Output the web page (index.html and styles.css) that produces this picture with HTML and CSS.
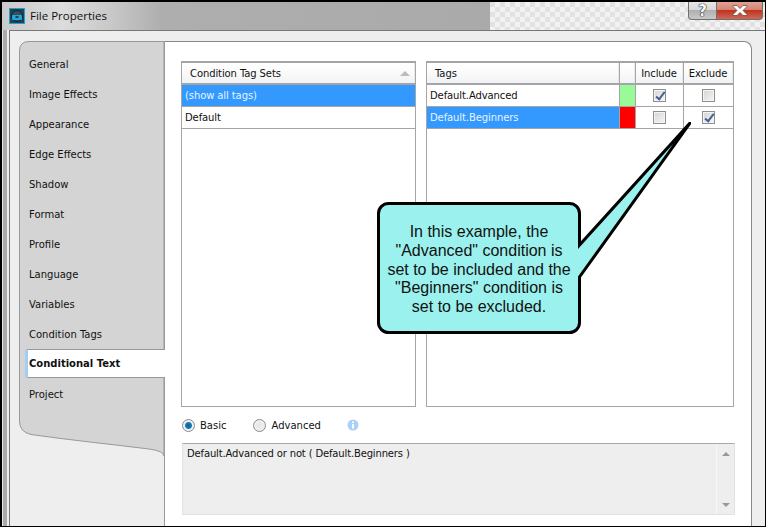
FILE: index.html
```html
<!DOCTYPE html>
<html>
<head>
	<meta charset="utf-8">
	<title>File Properties</title>
	<link rel="stylesheet" href="styles.css">
</head>
<body>
<div class="window">
	<div class="titlebar">
		<svg class="appicon" width="16" height="16" viewBox="0 0 16 16">
			<rect x="0.5" y="0.5" width="15" height="15" fill="#27424f" stroke="#1ba1d8"/>
			<circle cx="8" cy="8" r="5.5" fill="#33505e" stroke="#16222a"/>
			<rect x="3" y="7" width="10" height="5" rx="1" fill="#1ea5dd"/>
			<rect x="6.5" y="8" width="3" height="2" fill="#27424f"/>
		</svg>
		<span class="title">File Properties</span>
		<div class="checks"></div>
		<div class="winbtns">
			<div class="btn help">?</div>
			<div class="btn close">
				<svg width="16" height="11" viewBox="0 0 16 11">
					<path d="M1 0.5h4l3 3 3-3h4v1l-4 4 4 4v1h-4l-3-3-3 3h-4v-1l4-4-4-4z" fill="#fff" stroke="#6d4a44" stroke-width="0.8"/>
				</svg>
			</div>
		</div>
	</div>

	<div class="panel">
		<div class="sidebar">
			<svg class="tabshape" width="146" height="416" viewBox="0 0 146 416">
				<path d="M145 0.5H10Q0.5 0.5 0.5 10V380Q0.5 391 12 393.500C50 399 90 403 130 408Q145 410 145 415Z" fill="#d4d4d4" stroke="#999"/>
			</svg>
			<div class="tabs">
				<div class="tab">General</div>
				<div class="tab">Image Effects</div>
				<div class="tab">Appearance</div>
				<div class="tab">Edge Effects</div>
				<div class="tab">Shadow</div>
				<div class="tab">Format</div>
				<div class="tab">Profile</div>
				<div class="tab">Language</div>
				<div class="tab">Variables</div>
				<div class="tab">Condition Tags</div>
				<div class="tab active">Conditional Text</div>
				<div class="tab">Project</div>
			</div>
		</div>

		<div class="content">
			<div class="lists">
				<div class="list sets">
					<div class="head">
						<div class="hcell grow">Condition Tag Sets<span class="sortarrow"></span></div>
					</div>
					<div class="row sel"><div class="cell grow">(show all tags)</div></div>
					<div class="row"><div class="cell grow">Default</div></div>
				</div>
				<div class="list tags">
					<div class="head">
						<div class="hcell grow">Tags</div>
						<div class="hcell swatchcol"></div>
						<div class="hcell boxcol">Include</div>
						<div class="hcell boxcol">Exclude</div>
					</div>
					<div class="row">
						<div class="cell grow">Default.Advanced</div>
						<div class="cell swatchcol green"></div>
						<div class="cell boxcol"><span class="check on"></span></div>
						<div class="cell boxcol"><span class="check"></span></div>
					</div>
					<div class="row sel">
						<div class="cell grow">Default.Beginners</div>
						<div class="cell swatchcol red"></div>
						<div class="cell boxcol"><span class="check"></span></div>
						<div class="cell boxcol"><span class="check on"></span></div>
					</div>
				</div>
			</div>

			<div class="mode">
				<span class="radio on"></span><span class="radiolabel">Basic</span>
				<span class="radio"></span><span class="radiolabel">Advanced</span>
				<svg class="info" width="12" height="12" viewBox="0 0 12 12">
					<circle cx="6" cy="6" r="5.500" fill="#a9d1f7"/>
					<rect x="5" y="5" width="2" height="4.500" fill="#fff"/>
					<rect x="5" y="2.500" width="2" height="1.500" fill="#fff"/>
				</svg>
			</div>

			<div class="expr">
				<div class="exprtext">Default.Advanced or not ( Default.Beginners )</div>
				<div class="scroll">
					<span class="arrow up"></span>
					<span class="arrow down"></span>
				</div>
			</div>
		</div>
	</div>
</div>

<div class="callout">
	<svg width="320" height="220" viewBox="0 0 320 220">
		<path d="M17.500 81.500H198.500a10 10 0 0 1 10 10V123L319 1 208.500 155V200.500a10 10 0 0 1-10 10H17.500a10 10 0 0 1-10-10V91.500a10 10 0 0 1 10-10Z" fill="#9bf1ee" stroke="#000" stroke-width="3" stroke-linejoin="miter" stroke-miterlimit="30"/>
	</svg>
	<div class="callouttext">In this example, the<br>"Advanced" condition is<br>set to be included and the<br>"Beginners" condition is<br>set to be excluded.</div>
</div>
</body>
</html>
```

FILE: styles.css
```css
html, body {
	margin: 0;
	padding: 0;
	height: 100%;
	overflow: hidden;
	background: #000;
}

body {
	font-family: "DejaVu Sans", sans-serif;
	font-size: 10px;
	color: #111;
}

.window {
	box-sizing: border-box;
	width: 766px;
	height: 527px;
	border: solid #000;
	border-width: 2px 1px 1px 2px;
	background: linear-gradient(90deg, #e6e6e6 0, #e6e6e6 1px, #aaa 1px);
	display: flex;
	flex-direction: column;
}

.titlebar {
	flex: none;
	height: 28px;
	display: flex;
	align-items: flex-start;
	position: relative;
	background: linear-gradient(90deg, #c9c9c9 0, #dcdcdc 60px, #c8c8c8 110px, #aeaeae 160px, #aaa 480px);
}

.appicon {
	margin: 6px 0 0 7px;
	flex: none;
}

.title {
	font-family: "Open Sans", sans-serif;
	font-size: 11.500px;
	margin: 6px 0 0 5px;
	color: #111;
}

.checks {
	position: absolute;
	left: 488px;
	right: 0;
	top: 0;
	bottom: 0;
	background: repeating-conic-gradient(#f2f2f2 0 25%, #e2e2e2 0 50%) 0 0 / 10px 10px;
}

.winbtns {
	position: absolute;
	top: 0;
	right: 2px;
	display: flex;
}

.btn {
	height: 18px;
	box-sizing: border-box;
	border: 1px solid #6f6f6f;
	border-top: 0;
	display: flex;
	align-items: center;
	justify-content: center;
}

.help {
	width: 28px;
	border-right: 0;
	border-radius: 0 0 0 4px;
	font-size: 15px;
	font-weight: bold;
	color: #f8f8f8;
	text-shadow: 0 0 1px #222, 0 0 1px #222, 0 0 1px #222;
	background: linear-gradient(#e6e6e6, #d8d8d8 45%, #b0b0b0 50%, #c8c8c8);
}

.close {
	width: 47px;
	border-radius: 0 0 4px 0;
	background: linear-gradient(#e2a193, #d68471 45%, #bf3322 50%, #cd6a54);
}

.panel {
	flex: 1;
	min-height: 0;
	margin-left: 5px;
	display: flex;
	padding: 11px 13px 0 10px;
	background: #eee;
	border-left: 2px solid #eee;
	box-shadow: inset 1px 0 0 #777, inset 0 1px 0 #777;
}

.sidebar {
	flex: none;
	width: 145px;
	position: relative;
	border-right: 1px solid #999;
}

.tabshape {
	position: absolute;
	left: 0;
	top: 0;
}

.tabs {
	position: relative;
	padding-top: 8px;
	display: flex;
	flex-direction: column;
	align-items: flex-end;
}

.tab {
	box-sizing: border-box;
	width: 139px;
	height: 30px;
	padding-left: 4px;
	display: flex;
	align-items: center;
}

.tab.active {
	font-weight: bold;
	background: #fff;
	height: 29px;
	margin: 0 -1px 1px 0;
	width: 140px;
	border: solid #999;
	border-width: 1px 0;
	border-left: 3px solid #a3cdf8;
	border-radius: 3px 0 0 3px;
	padding-left: 1px;
}

.content {
	flex: 1;
	min-width: 0;
	background: #fff;
	border: solid #888;
	border-width: 1px 1px 0 0;
	border-radius: 0 8px 0 0;
	padding: 19px 16px 0 16px;
}

.lists {
	display: flex;
	gap: 10px;
	height: 346px;
}

.list {
	box-sizing: border-box;
	border: 1px solid #a5a5a5;
	border-top-width: 2px;
	background: #fff;
}

.sets {
	width: 235px;
}

.tags {
	width: 308px;
}

.head {
	display: flex;
	height: 20px;
	background: linear-gradient(#fff, #fafafa 50%, #f0f2f5);
	border-bottom: 2px solid #a5a5a5;
}

.hcell {
	box-sizing: border-box;
	padding-left: 8px;
	display: flex;
	align-items: center;
	border-right: 1px solid #eaeaea;
	position: relative;
	letter-spacing: -0.1px;
}

.grow {
	flex: 1;
	min-width: 0;
}

.sortarrow {
	position: absolute;
	right: 4px;
	top: 8px;
	border: solid transparent;
	border-width: 0 5px 5px;
	border-bottom-color: #bbb;
}

.row {
	display: flex;
	height: 21px;
	border-bottom: 1px solid #a5a5a5;
}

.row.sel {
	background: #3399ff;
	color: #e8f3ff;
}

.cell {
	box-sizing: border-box;
	padding-left: 3px;
	display: flex;
	align-items: center;
	letter-spacing: -0.1px;
}

.swatchcol {
	width: 16px;
	flex: none;
	padding: 0;
	border-left: 1px solid #a5a5a5;
}

.boxcol {
	width: 48px;
	flex: none;
	justify-content: center;
	padding: 0;
	border-left: 1px solid #a5a5a5;
	color: #111;
}

.boxcol:last-child {
	width: 50px;
}

.cell.boxcol {
	background: #fff;
}

.green {
	background: #98fb98;
}

.red {
	background: #ff0000;
}

.check {
	box-sizing: border-box;
	width: 13px;
	height: 13px;
	border: 1px solid #8e8f8f;
	background: linear-gradient(135deg, #d4d4d4, #f6f6f6);
	box-shadow: inset 0 0 0 1px #f4f4f4;
	position: relative;
}

.check.on::after {
	content: "";
	position: absolute;
	left: 4px;
	top: 0;
	width: 3px;
	height: 8px;
	border: solid #4a5f97;
	border-width: 0 2px 2px 0;
	transform: rotate(38deg);
}

.mode {
	display: flex;
	align-items: center;
	height: 36px;
	padding-left: 1px;
}

.radio {
	box-sizing: border-box;
	width: 13px;
	height: 13px;
	border-radius: 50%;
	border: 1px solid #8a8a8a;
	background: radial-gradient(circle, #e6e6e6, #f4f4f4);
	flex: none;
}

.radio.on {
	background: radial-gradient(circle, #0a5f95 0, #1a7fb8 3px, #f0f0f0 4px);
}

.radiolabel {
	margin: 0 27px 0 5px;
}

.radiolabel:nth-of-type(2) {
	margin-right: 27px;
}

.radiolabel:nth-of-type(4) {
	margin-right: 26px;
}

.info {
	flex: none;
}

.expr {
	display: flex;
	box-sizing: border-box;
	width: 553px;
	height: 72px;
	margin-left: 1px;
	background: #eee;
	border: 1px solid #dfe3e8;
	border-top-color: #aaa;
}

.exprtext {
	flex: 1;
	padding: 4px 0 0 4px;
	letter-spacing: -0.15px;
}

.scroll {
	width: 17px;
	border-left: 1px solid #f8f8f8;
	display: flex;
	flex-direction: column;
	justify-content: space-between;
	align-items: center;
	padding: 8px 0 7px;
}

.arrow {
	border: solid transparent;
	border-width: 0 4px;
}

.arrow.up {
	border-bottom: 4px solid #999;
}

.arrow.down {
	border-top: 4px solid #999;
}

.callout {
	position: absolute;
	left: 371px;
	top: 122px;
	width: 320px;
	height: 220px;
}

.callouttext {
	position: absolute;
	left: 8px;
	top: 101px;
	width: 200px;
	text-align: center;
	font-family: "Liberation Sans", Arial, sans-serif;
	font-size: 16px;
	line-height: 18.750px;
	color: #111;
}
```
